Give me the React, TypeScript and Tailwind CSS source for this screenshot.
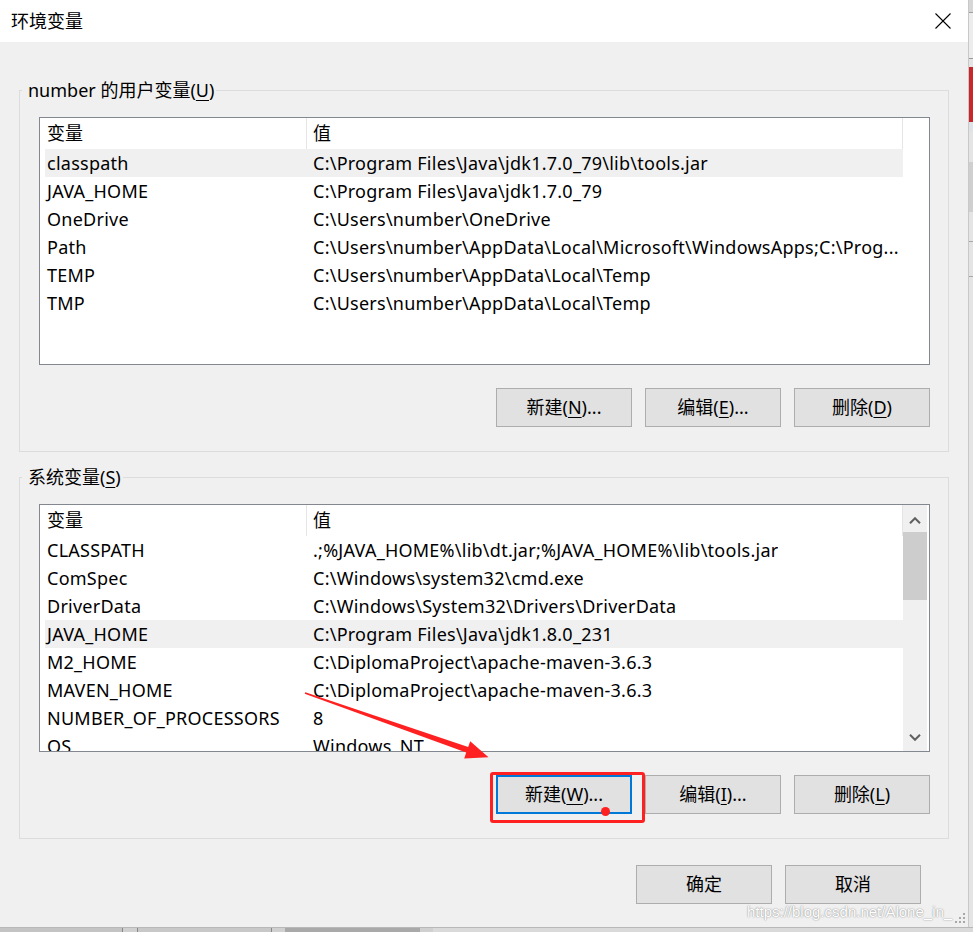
import React from 'react';

const userVars: [string, string][] = [
  ['classpath', 'C:\\Program Files\\Java\\jdk1.7.0_79\\lib\\tools.jar'],
  ['JAVA_HOME', 'C:\\Program Files\\Java\\jdk1.7.0_79'],
  ['OneDrive', 'C:\\Users\\number\\OneDrive'],
  ['Path', 'C:\\Users\\number\\AppData\\Local\\Microsoft\\WindowsApps;C:\\Prog...'],
  ['TEMP', 'C:\\Users\\number\\AppData\\Local\\Temp'],
  ['TMP', 'C:\\Users\\number\\AppData\\Local\\Temp'],
];

const sysVars: [string, string][] = [
  ['CLASSPATH', '.;%JAVA_HOME%\\lib\\dt.jar;%JAVA_HOME%\\lib\\tools.jar'],
  ['ComSpec', 'C:\\Windows\\system32\\cmd.exe'],
  ['DriverData', 'C:\\Windows\\System32\\Drivers\\DriverData'],
  ['JAVA_HOME', 'C:\\Program Files\\Java\\jdk1.8.0_231'],
  ['M2_HOME', 'C:\\DiplomaProject\\apache-maven-3.6.3'],
  ['MAVEN_HOME', 'C:\\DiplomaProject\\apache-maven-3.6.3'],
  ['NUMBER_OF_PROCESSORS', '8'],
  ['OS', 'Windows_NT'],
];

function Chevron({ up }: { up?: boolean }) {
  return (
    <svg width="12" height="7" viewBox="0 0 12 7">
      <polyline
        points={up ? '1,6.2 6,1.2 11,6.2' : '1,0.8 6,5.8 11,0.8'}
        fill="none"
        stroke="#606060"
        strokeWidth="2"
      />
    </svg>
  );
}

function Scrollbar() {
  return (
    <div className="w-[24px] shrink-0 bg-[#f0f0f0] flex flex-col">
      <div className="h-[27px] shrink-0 flex justify-center pt-[12px]">
        <Chevron up />
      </div>
      <div className="h-[68px] shrink-0 bg-[#cdcdcd]" />
      <div className="flex-1" />
      <div className="h-[27px] shrink-0 flex justify-center pt-[10px]">
        <Chevron />
      </div>
    </div>
  );
}

function VarList({ rows, selected, scroll }: { rows: [string, string][]; selected: number; scroll?: boolean }) {
  return (
    <div className="h-[248px] border border-[#828790] bg-white flex overflow-hidden">
      <div className="w-[863px] shrink-0 flex flex-col">
        <div className="h-[31px] shrink-0 flex">
          <div className="w-[267px] pl-[7px] flex items-center border-r border-[#e5e5e5]">变量</div>
          <div className="w-[596px] pl-[6px] flex items-center border-r border-[#e5e5e5]">值</div>
        </div>
        {rows.map(([n, v], i) => (
          <div
            key={n + i}
            className={
              i === selected
                ? 'ml-[5px] h-[28px] shrink-0 flex items-center tracking-[0.25px] bg-[#f0f0f0]'
                : 'ml-[5px] h-[28px] shrink-0 flex items-center tracking-[0.25px]'
            }
          >
            <div className="w-[268px] shrink-0 pl-[2px] whitespace-nowrap">{n}</div>
            <div className="whitespace-nowrap overflow-hidden">{v}</div>
          </div>
        ))}
      </div>
      {scroll && <Scrollbar />}
    </div>
  );
}

function Btn({ children, focused }: { children: React.ReactNode; focused?: boolean }) {
  return (
    <div
      className={
        focused
          ? 'w-[136px] h-[39px] flex items-center justify-center bg-[#e1e1e1] border-2 border-[#0078d7]'
          : 'w-[136px] h-[39px] flex items-center justify-center bg-[#e1e1e1] border border-[#adadad]'
      }
    >
      {children}
    </div>
  );
}

function U({ children }: { children: React.ReactNode }) {
  return <span className="underline underline-offset-[3px]">{children}</span>;
}

function Group({ label, children }: { label: React.ReactNode; children: React.ReactNode }) {
  return (
    <fieldset className="border border-[#dcdcdc] pl-[19px] pr-[18px] pt-[14px] pb-[24px]">
      <legend className="ml-[-17px] pl-[6px] pr-[2px] leading-[25px]">{label}</legend>
      {children}
    </fieldset>
  );
}

export default function App() {
  return (
    <div className="relative w-[973px] h-[932px] overflow-hidden flex flex-col bg-[#f0f0f0] text-black text-[18px] font-['Noto_Sans','Noto_Sans_CJK_SC',sans-serif]">
      <div className="h-[927px] flex shrink-0">
        {/* dialog */}
        <div className="w-[968px] shrink-0 flex flex-col">
          <div className="h-[42px] shrink-0 bg-white flex items-center justify-between pl-[11px] pr-[17px]">
            <span className="leading-none">环境变量</span>
            <svg width="16" height="16" viewBox="0 0 16 16">
              <line x1="0.5" y1="0.5" x2="15.5" y2="15.5" stroke="#000" strokeWidth="1.1" />
              <line x1="15.5" y1="0.5" x2="0.5" y2="15.5" stroke="#000" strokeWidth="1.1" />
            </svg>
          </div>
          <div className="relative flex-1 bg-[#f0f0f0] pl-[19px] pr-[19px] pt-[36px] flex flex-col">
            <Group
              label={
                <>
                  number 的用户变量(<U>U</U>)
                </>
              }
            >
              <VarList rows={userVars} selected={0} />
              <div className="mt-[23px] flex justify-end gap-[13px]">
                <Btn>
                  新建(<U>N</U>)...
                </Btn>
                <Btn>
                  编辑(<U>E</U>)...
                </Btn>
                <Btn>
                  删除(<U>D</U>)
                </Btn>
              </div>
            </Group>
            <div className="h-[13px] shrink-0" />
            <Group
              label={
                <>
                  系统变量(<U>S</U>)
                </>
              }
            >
              <VarList rows={sysVars} selected={3} scroll />
              <div className="mt-[23px] flex justify-end gap-[13px]">
                <div className="relative">
                  <Btn focused>
                    新建(<U>W</U>)...
                  </Btn>
                  <div className="absolute left-[-6px] top-[-3px] w-[155px] h-[51px] border-[3px] border-[#ff2121] rounded-[3px]" />
                  <div className="absolute left-[105px] top-[32px] w-[9px] h-[9px] rounded-full bg-[#ff2121]" />
                </div>
                <Btn>
                  编辑(<U>I</U>)...
                </Btn>
                <Btn>
                  删除(<U>L</U>)
                </Btn>
              </div>
            </Group>
            <div className="mt-[26px] pr-[28px] flex justify-end gap-[13px]">
              <Btn>确定</Btn>
              <Btn>取消</Btn>
            </div>
            <span className="absolute left-[747px] top-[861px] text-[15px] leading-[18px] text-white font-['Liberation_Sans',Arial,sans-serif] [text-shadow:0_0_1px_#8c8c8c,0_0_2px_#b0b0b0]">
              https://blog.csdn.net/Alone_in_
            </span>
            <svg className="absolute left-[955px] top-[871px]" width="12" height="12" viewBox="0 0 12 12">
              <rect x="8" y="0" width="2" height="2" fill="#a8a8a8" />
              <rect x="4" y="4" width="2" height="2" fill="#a8a8a8" />
              <rect x="8" y="4" width="2" height="2" fill="#a8a8a8" />
              <rect x="0" y="8" width="2" height="2" fill="#a8a8a8" />
              <rect x="4" y="8" width="2" height="2" fill="#a8a8a8" />
              <rect x="8" y="8" width="2" height="2" fill="#a8a8a8" />
            </svg>
          </div>
        </div>
        {/* background window edge */}
        <div className="flex-1 flex flex-col bg-[#e4e4e4] border-l border-[#c8c8c8]">
          <div className="h-[13px] shrink-0 bg-[#d6d6d6] border-b border-[#a0a0a0]" />
          <div className="h-[46px] shrink-0 bg-[#ececec] border-b border-[#9a9a9a]" />
          <div className="h-[8px] shrink-0" />
          <div className="h-[55px] shrink-0 bg-[#c8262b]" />
          <div className="h-[10px] shrink-0 bg-[#dfe3e8]" />
          <div className="h-[30px] shrink-0" />
          <div className="h-[50px] shrink-0 bg-[#cfcfcf]" />
          <div className="h-[30px] shrink-0 border-b border-[#a8a8a8]" />
          <div className="h-[35px] shrink-0 border-b border-[#a8a8a8]" />
          <div className="flex-1" />
        </div>
      </div>
      {/* taskbar strip */}
      <div className="h-[5px] shrink-0 flex bg-[#d0d0d0] border-t border-[#b8b8b8]">
        <div className="w-[123px] bg-[#c4c4c4] border-r border-[#888]" />
        <div className="w-[14px]" />
        <div className="w-[135px] bg-[#c8c8c8] border-l border-r border-[#888]" />
        <div className="w-[13px]" />
        <div className="w-[135px] bg-[#a9a9a9]" />
        <div className="w-[13px]" />
        <div className="flex-1 bg-[#dadada]" />
      </div>
      {/* annotation arrow */}
      <svg
        className="absolute left-[300px] top-[685px]"
        width="195"
        height="80"
        viewBox="300 685 195 80"
      >
        <polygon
          points="305.3,692.2 468.2,746.9 470.2,741.2 488.5,757.2 464.2,758.6 466.2,752.5 304.7,693.8"
          fill="#ff2121"
        />
      </svg>
    </div>
  );
}
